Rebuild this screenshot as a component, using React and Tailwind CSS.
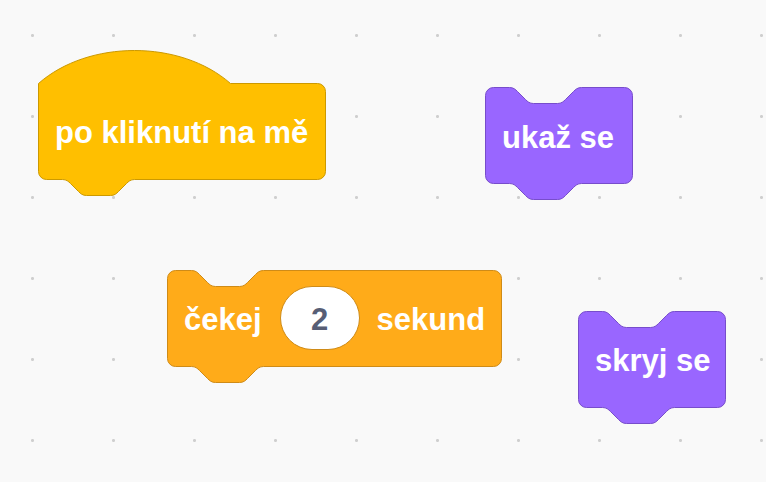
import React from 'react';

// Scratch-like block shapes, drawn at 2x scale
const H = 97;

function bottomPath(w, h) {
  return `V${h - 8.5} a8,8 0 0 1 -8,8 H96.5 c-4,0 -6,2 -8,4 l-8,8 c-2,2 -4,4 -8,4 h-24 c-4,0 -6,-2 -8,-4 l-8,-8 c-2,-2 -4,-4 -8,-4 H8.5 a8,8 0 0 1 -8,-8 z`;
}

function stackPath(w, h) {
  return `M0.5,8.5 a8,8 0 0 1 8,-8 H24.5 c4,0 6,2 8,4 l8,8 c2,2 4,4 8,4 h24 c4,0 6,-2 8,-4 l8,-8 c2,-2 4,-4 8,-4 H${w - 8.5} a8,8 0 0 1 8,8 ` + bottomPath(w, h);
}

function hatPath(w, h) {
  return `M0.5,0.5 c50,-44 142,-44 192,0 H${w - 8.5} a8,8 0 0 1 8,8 ` + bottomPath(w, h);
}

const font = "font-['Liberation_Sans',Arial,sans-serif] font-bold text-[31px] leading-none";

function Block({ left, top, width, fill, stroke, hat, children }) {
  return (
    <div className="absolute" style={{ left, top, width, height: H }}>
      <svg className="absolute left-0 top-0 overflow-visible" width={width + 1} height={H + 17}>
        <path d={hat ? hatPath(width, H) : stackPath(width, H)} fill={fill} stroke={stroke} strokeWidth="1" />
      </svg>
      <div className={`relative flex h-full items-center pt-[3px] pl-[17px] text-white ${font}`}>
        {children}
      </div>
    </div>
  );
}

export default function App() {
  return (
    <div className="relative w-[766px] h-[482px] overflow-hidden bg-[#f9f9f9] bg-[radial-gradient(circle,#cfcfcf_1.2px,transparent_1.8px)] bg-[length:81px_81px] bg-[position:-8px_-5px]">
      <Block left={38} top={82.5} width={288} fill="#FFBF00" stroke="#CC9900" hat>
        <span>po kliknutí na mě</span>
      </Block>

      <Block left={485} top={87} width={148} fill="#9966FF" stroke="#774DCB">
        <span>ukaž se</span>
      </Block>

      <Block left={167} top={269.5} width={335} fill="#FFAB19" stroke="#CF8B17">
        <span>čekej</span>
        <div className="ml-[18px] mt-[-3px] flex h-[64px] w-[80px] items-center justify-center rounded-full border border-[#CF8B17] bg-white pt-[3px] text-[#575E75]">
          2
        </div>
        <span className="ml-[17px]">sekund</span>
      </Block>

      <Block left={578} top={310.5} width={148} fill="#9966FF" stroke="#774DCB">
        <span>skryj se</span>
      </Block>
    </div>
  );
}
